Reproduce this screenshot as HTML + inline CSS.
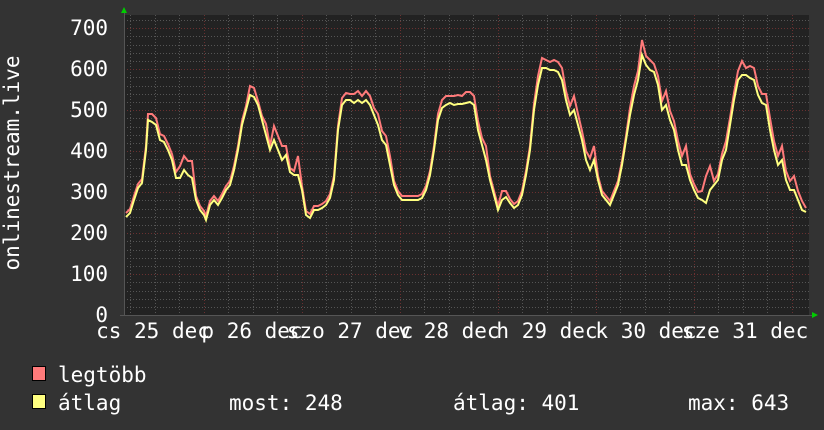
<!DOCTYPE html>
<html><head><meta charset="utf-8"><style>
html,body{margin:0;padding:0;background:#333;}
svg{display:block}
text{font-family:"DejaVu Sans Mono","Liberation Mono",monospace;font-size:21px;fill:#fff}
</style></head><body>
<svg width="824" height="430" viewBox="0 0 824 430" xmlns="http://www.w3.org/2000/svg">
<rect width="824" height="430" fill="#333"/>
<rect x="124" y="15" width="685" height="301" fill="#222"/>
<g stroke="#555" stroke-width="1" stroke-dasharray="1,2">
<line x1="124" x2="809" y1="307.5" y2="307.5"/><line x1="124" x2="809" y1="299.5" y2="299.5"/><line x1="124" x2="809" y1="291.5" y2="291.5"/><line x1="124" x2="809" y1="282.5" y2="282.5"/>
<line x1="124" x2="809" y1="266.5" y2="266.5"/><line x1="124" x2="809" y1="258.5" y2="258.5"/><line x1="124" x2="809" y1="250.5" y2="250.5"/><line x1="124" x2="809" y1="241.5" y2="241.5"/>
<line x1="124" x2="809" y1="225.5" y2="225.5"/><line x1="124" x2="809" y1="217.5" y2="217.5"/><line x1="124" x2="809" y1="209.5" y2="209.5"/><line x1="124" x2="809" y1="200.5" y2="200.5"/>
<line x1="124" x2="809" y1="184.5" y2="184.5"/><line x1="124" x2="809" y1="176.5" y2="176.5"/><line x1="124" x2="809" y1="168.5" y2="168.5"/><line x1="124" x2="809" y1="159.5" y2="159.5"/>
<line x1="124" x2="809" y1="143.5" y2="143.5"/><line x1="124" x2="809" y1="135.5" y2="135.5"/><line x1="124" x2="809" y1="127.5" y2="127.5"/><line x1="124" x2="809" y1="118.5" y2="118.5"/>
<line x1="124" x2="809" y1="102.5" y2="102.5"/><line x1="124" x2="809" y1="94.5" y2="94.5"/><line x1="124" x2="809" y1="86.5" y2="86.5"/><line x1="124" x2="809" y1="77.5" y2="77.5"/>
<line x1="124" x2="809" y1="61.5" y2="61.5"/><line x1="124" x2="809" y1="53.5" y2="53.5"/><line x1="124" x2="809" y1="45.5" y2="45.5"/><line x1="124" x2="809" y1="36.5" y2="36.5"/>
<line x1="124" x2="809" y1="20.5" y2="20.5"/>
<line y1="15" y2="316" x1="130.5" x2="130.5"/><line y1="15" y2="316" x1="155.5" x2="155.5"/><line y1="15" y2="316" x1="179.5" x2="179.5"/>
<line y1="15" y2="316" x1="228.5" x2="228.5"/><line y1="15" y2="316" x1="253.5" x2="253.5"/><line y1="15" y2="316" x1="277.5" x2="277.5"/>
<line y1="15" y2="316" x1="326.5" x2="326.5"/><line y1="15" y2="316" x1="351.5" x2="351.5"/><line y1="15" y2="316" x1="375.5" x2="375.5"/>
<line y1="15" y2="316" x1="424.5" x2="424.5"/><line y1="15" y2="316" x1="449.5" x2="449.5"/><line y1="15" y2="316" x1="473.5" x2="473.5"/>
<line y1="15" y2="316" x1="522.5" x2="522.5"/><line y1="15" y2="316" x1="547.5" x2="547.5"/><line y1="15" y2="316" x1="571.5" x2="571.5"/>
<line y1="15" y2="316" x1="620.5" x2="620.5"/><line y1="15" y2="316" x1="645.5" x2="645.5"/><line y1="15" y2="316" x1="669.5" x2="669.5"/>
<line y1="15" y2="316" x1="718.5" x2="718.5"/><line y1="15" y2="316" x1="743.5" x2="743.5"/><line y1="15" y2="316" x1="767.5" x2="767.5"/>
</g>
<g stroke="#6a3030" stroke-width="1" stroke-dasharray="1,2">
<line x1="124" x2="809" y1="274.5" y2="274.5"/><line x1="124" x2="809" y1="233.5" y2="233.5"/><line x1="124" x2="809" y1="192.5" y2="192.5"/><line x1="124" x2="809" y1="151.5" y2="151.5"/><line x1="124" x2="809" y1="110.5" y2="110.5"/><line x1="124" x2="809" y1="69.5" y2="69.5"/><line x1="124" x2="809" y1="28.5" y2="28.5"/>
<line y1="15" y2="316" x1="204.5" x2="204.5"/><line y1="15" y2="316" x1="302.5" x2="302.5"/><line y1="15" y2="316" x1="400.5" x2="400.5"/><line y1="15" y2="316" x1="498.5" x2="498.5"/><line y1="15" y2="316" x1="596.5" x2="596.5"/><line y1="15" y2="316" x1="694.5" x2="694.5"/><line y1="15" y2="316" x1="792.5" x2="792.5"/>
</g>
<line x1="124.5" y1="10" x2="124.5" y2="316" stroke="#555"/>
<line x1="120" y1="315.5" x2="812" y2="315.5" stroke="#555"/>
<polygon points="121,13 127,13 124,7" fill="#0c0"/>
<polygon points="812,312 812,318 818,315" fill="#0c0"/>
<g transform="translate(0,-4)">
<polyline fill="none" stroke="#ff7a7a" stroke-width="2" points="126,217 130,213 134,200 138,188 142,183 146,150 148,118 152,118 156,122 160,138 164,140 168,148 172,158 176,176 180,170 184,160 188,165 192,165 196,200 200,210 204,215 206,220 210,205 214,200 218,205 222,198 226,190 230,185 234,170 238,150 242,125 246,110 250,90 254,92 258,105 262,120 266,128 270,150 274,130 278,140 282,150 286,150 290,172 294,175 298,160 302,190 306,215 310,218 314,210 318,210 322,208 326,205 330,198 334,180 338,130 342,102 346,97 350,98 354,98 358,95 362,100 366,95 370,100 374,112 378,118 382,135 386,140 390,160 394,185 398,195 402,200 406,200 410,200 414,200 418,200 422,198 426,190 430,175 434,150 438,118 442,104 446,100 450,100 454,100 458,99 462,100 466,96 470,96 474,100 478,125 482,142 486,150 490,180 494,195 498,210 502,195 506,195 510,203 514,208 518,205 522,195 526,175 530,150 534,108 538,80 542,62 546,64 550,66 554,64 558,66 562,72 566,95 570,110 574,100 578,118 582,135 586,155 590,162 594,150 598,180 602,195 606,200 610,205 614,195 618,185 622,165 626,140 630,112 634,90 638,75 642,44 646,60 650,64 654,68 658,80 662,105 666,95 670,115 674,125 678,145 682,160 686,150 690,178 694,188 698,196 702,195 706,180 710,170 714,185 718,178 722,158 726,145 730,122 734,97 738,75 742,65 746,72 750,70 754,72 758,90 762,98 766,98 770,122 774,145 778,160 782,150 786,175 790,185 794,180 798,195 802,205 806,212"/>
</g>
<polyline fill="none" stroke="#ffff80" stroke-width="2" points="126,217 130,213 134,200 138,188 142,183 146,150 148,120 152,122 156,125 160,140 164,142 168,150 172,160 176,178 180,178 184,170 188,175 192,178 196,200 200,210 204,215 206,220 210,205 214,200 218,205 222,198 226,190 230,185 234,170 238,150 242,125 246,110 250,95 254,97 258,105 262,120 266,135 270,150 274,140 278,150 282,160 286,155 290,172 294,175 298,175 302,190 306,215 310,218 314,210 318,210 322,208 326,205 330,198 334,180 338,130 342,105 346,100 350,100 354,103 358,100 362,103 366,100 370,105 374,115 378,125 382,140 386,145 390,165 394,185 398,195 402,200 406,200 410,200 414,200 418,200 422,198 426,190 430,175 434,150 438,120 442,108 446,105 450,103 454,105 458,104 462,104 466,103 470,102 474,105 478,130 482,145 486,160 490,180 494,195 498,210 502,200 506,197 510,203 514,208 518,205 522,195 526,175 530,150 534,110 538,85 542,68 546,68 550,70 554,70 558,72 562,80 566,100 570,115 574,110 578,125 582,140 586,160 590,170 594,160 598,180 602,195 606,200 610,205 614,195 618,185 622,165 626,140 630,115 634,95 638,80 642,55 646,65 650,70 654,72 658,85 662,110 666,105 670,120 674,130 678,150 682,165 686,165 690,180 694,190 698,198 702,200 706,203 710,190 714,185 718,180 722,160 726,150 730,125 734,100 738,80 742,75 746,75 750,78 754,80 758,95 762,103 766,105 770,130 774,150 778,165 782,160 786,180 790,190 794,190 798,200 802,210 806,212"/>
<g text-anchor="end">
<text x="108" y="35">700</text><text x="108" y="76">600</text><text x="108" y="117">500</text><text x="108" y="158">400</text><text x="108" y="199">300</text><text x="108" y="240">200</text><text x="108" y="281">100</text><text x="108" y="322">0</text>
</g>
<text transform="translate(19,163) rotate(-90)" text-anchor="middle">onlinestream.live</text>
<g text-anchor="middle">
<text x="153" y="338">cs 25 dec</text><text x="252" y="338">p 26 dec</text><text x="350" y="338">szo 27 dec</text><text x="449" y="338">v 28 dec</text><text x="547" y="338">h 29 dec</text><text x="646" y="338">k 30 dec</text><text x="745" y="338">sze 31 dec</text>
</g>
<rect x="32.5" y="366.5" width="13" height="14" fill="#ff7a7a" stroke="#000"/>
<rect x="32.5" y="394.5" width="13" height="14" fill="#ffff80" stroke="#000"/>
<text x="58" y="382">legtöbb</text>
<text x="58" y="410">átlag</text>
<text x="229" y="410">most: 248</text>
<text x="453" y="410">átlag: 401</text>
<text x="688" y="410">max: 643</text>
</svg>
</body></html>
